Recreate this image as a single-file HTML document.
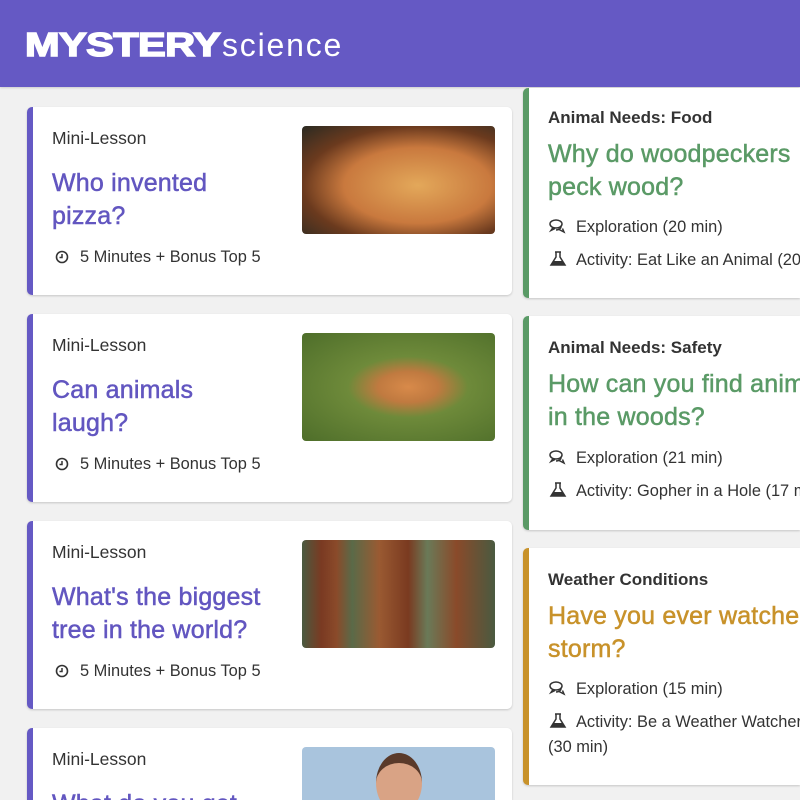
<!DOCTYPE html>
<html><head><style>
*{margin:0;padding:0;box-sizing:border-box}
html,body{width:800px;height:800px;overflow:hidden}
body{background:#f1f1f1;font-family:"Liberation Sans",Arial,sans-serif;position:relative}
.hdr{position:absolute;left:0;top:0;width:800px;height:87px;background:#6559c4;box-shadow:0 1px 2px rgba(0,0,0,.15)}
.logo{position:absolute;left:25px;top:27px;color:#fff;white-space:nowrap}
.logo b{font-weight:900;font-size:33px;letter-spacing:-0.5px;-webkit-text-stroke:1.5px #fff;display:inline-block;transform:scaleX(1.26);transform-origin:left;line-height:36px}
.logo span{position:absolute;left:197px;top:0;font-size:32px;font-weight:300;letter-spacing:1.8px;line-height:36px}
.card{position:absolute;background:#fff;border-radius:5px;box-shadow:0 1px 2px rgba(0,0,0,.18)}
.l{left:27px;width:485px;height:188px;border-left:6px solid #6559c4}
.r{left:523px;width:277px;border-left:6px solid #5a9a66;border-radius:5px 0 0 5px;overflow:hidden}
.lab{position:absolute;left:19px;font-size:17.5px;color:#333}
.tt{position:absolute;left:19px;font-size:25px;line-height:33px;color:#6256c0;-webkit-text-stroke:0.5px #6256c0;letter-spacing:0.2px}
.meta{position:absolute;left:19px;font-size:16.4px;color:#333;white-space:nowrap}
.img{position:absolute;left:269px;top:19px;width:193px;height:108px;border-radius:4px;overflow:hidden}
.rl{position:absolute;left:19px;font-size:17px;font-weight:bold;color:#333;white-space:nowrap}
.rt{position:absolute;left:19px;font-size:25px;line-height:33px;color:#5a9a66;white-space:nowrap;-webkit-text-stroke:0.5px #5a9a66;letter-spacing:0.2px}
.rm{position:absolute;left:19px;font-size:16.4px;color:#333;white-space:nowrap;line-height:25px}
.ic{display:inline-block;width:20px;margin-right:8px;vertical-align:-2px}
</style></head><body>
<div class="hdr"><div class="logo"><b>MYSTERY</b><span>science</span></div></div>

<div class="card l" style="top:107px">
<div class="lab" style="top:21px">Mini-Lesson</div>
<div class="tt" style="top:60px">Who invented<br>pizza?</div>
<div class="meta" style="top:141px"><svg class="ic" width="20" height="14" viewBox="0 0 20 14"><circle cx="10" cy="7" r="5.5" fill="none" stroke="#333" stroke-width="1.6"/><path d="M10 4v3.5H7.5" fill="none" stroke="#333" stroke-width="1.5"/></svg>5 Minutes + Bonus Top 5</div>
<div class="img" style="background:radial-gradient(ellipse at 60% 55%,#e3a85a 0,#c9793e 45%,#6b3a1e 70%,#2a2a22 100%)"></div>
</div>
<div class="card l" style="top:314px">
<div class="lab" style="top:21px">Mini-Lesson</div>
<div class="tt" style="top:60px">Can animals<br>laugh?</div>
<div class="meta" style="top:141px"><svg class="ic" width="20" height="14" viewBox="0 0 20 14"><circle cx="10" cy="7" r="5.5" fill="none" stroke="#333" stroke-width="1.6"/><path d="M10 4v3.5H7.5" fill="none" stroke="#333" stroke-width="1.5"/></svg>5 Minutes + Bonus Top 5</div>
<div class="img" style="background:radial-gradient(ellipse at 55% 50%,#d88a4a 0,#c07a40 20%,#6e8a3a 40%,#4e6e2a 100%)"></div>
</div>
<div class="card l" style="top:521px">
<div class="lab" style="top:21px">Mini-Lesson</div>
<div class="tt" style="top:60px">What's the biggest<br>tree in the world?</div>
<div class="meta" style="top:141px"><svg class="ic" width="20" height="14" viewBox="0 0 20 14"><circle cx="10" cy="7" r="5.5" fill="none" stroke="#333" stroke-width="1.6"/><path d="M10 4v3.5H7.5" fill="none" stroke="#333" stroke-width="1.5"/></svg>5 Minutes + Bonus Top 5</div>
<div class="img" style="background:linear-gradient(90deg,#4a5a40 0,#7a3a22 10%,#8a4a2a 18%,#5a6a48 26%,#9a5a32 40%,#7a3a20 55%,#6a7a58 65%,#8a4a2a 80%,#4a5a40 100%)"></div>
</div>
<div class="card l" style="top:728px;height:72px;border-radius:5px 5px 0 0;overflow:hidden">
<div class="lab" style="top:21px">Mini-Lesson</div>
<div class="tt" style="top:60px">What do you get</div>
<div class="img" style="background:#a9c4dd"><div style="position:absolute;left:74px;top:6px;width:46px;height:60px;border-radius:50%;background:#d9a385;border-top:10px solid #5a3a2a"></div></div>
</div>

<div class="card r" style="top:88px;height:210px">
<div class="rl" style="top:20px">Animal Needs: Food</div>
<div class="rt" style="top:50px">Why do woodpeckers<br>peck wood?</div>
<div class="rm" style="top:127px"><svg class="ic" width="20" height="16" viewBox="0 0 20 16"><ellipse cx="8" cy="6" rx="6" ry="4" fill="none" stroke="#333" stroke-width="1.5"/><path d="M5 9.5l-2 3 4-2M13 8.5a5 3.5 0 0 1-5 3.5M11 11.5l5 2.5-1.5-3.5" fill="none" stroke="#333" stroke-width="1.5"/></svg>Exploration (20 min)</div>
<div class="rm" style="top:160px"><svg class="ic" width="20" height="16" viewBox="0 0 20 16"><path d="M7 1h6M8 1v5l-5 8h14l-5-8V1" fill="none" stroke="#333" stroke-width="1.5"/><path d="M5.5 10h9l2 4h-13z" fill="#333"/></svg>Activity: Eat Like an Animal (20 min)</div>
</div>
<div class="card r" style="top:316px;height:214px">
<div class="rl" style="top:22px">Animal Needs: Safety</div>
<div class="rt" style="top:52px">How can you find animals<br>in the woods?</div>
<div class="rm" style="top:130px"><svg class="ic" width="20" height="16" viewBox="0 0 20 16"><ellipse cx="8" cy="6" rx="6" ry="4" fill="none" stroke="#333" stroke-width="1.5"/><path d="M5 9.5l-2 3 4-2M13 8.5a5 3.5 0 0 1-5 3.5M11 11.5l5 2.5-1.5-3.5" fill="none" stroke="#333" stroke-width="1.5"/></svg>Exploration (21 min)</div>
<div class="rm" style="top:163px"><svg class="ic" width="20" height="16" viewBox="0 0 20 16"><path d="M7 1h6M8 1v5l-5 8h14l-5-8V1" fill="none" stroke="#333" stroke-width="1.5"/><path d="M5.5 10h9l2 4h-13z" fill="#333"/></svg>Activity: Gopher in a Hole (17 min)</div>
</div>
<div class="card r" style="top:548px;height:237px;border-left-color:#c8922a">
<div class="rl" style="top:22px">Weather Conditions</div>
<div class="rt" style="top:52px;color:#c8922a;-webkit-text-stroke:0.5px #c8922a">Have you ever watched a<br>storm?</div>
<div class="rm" style="top:129px"><svg class="ic" width="20" height="16" viewBox="0 0 20 16"><ellipse cx="8" cy="6" rx="6" ry="4" fill="none" stroke="#333" stroke-width="1.5"/><path d="M5 9.5l-2 3 4-2M13 8.5a5 3.5 0 0 1-5 3.5M11 11.5l5 2.5-1.5-3.5" fill="none" stroke="#333" stroke-width="1.5"/></svg>Exploration (15 min)</div>
<div class="rm" style="top:162px"><svg class="ic" width="20" height="16" viewBox="0 0 20 16"><path d="M7 1h6M8 1v5l-5 8h14l-5-8V1" fill="none" stroke="#333" stroke-width="1.5"/><path d="M5.5 10h9l2 4h-13z" fill="#333"/></svg>Activity: Be a Weather Watcher</div>
<div class="rm" style="top:187px">(30 min)</div>
</div>
</body></html>
